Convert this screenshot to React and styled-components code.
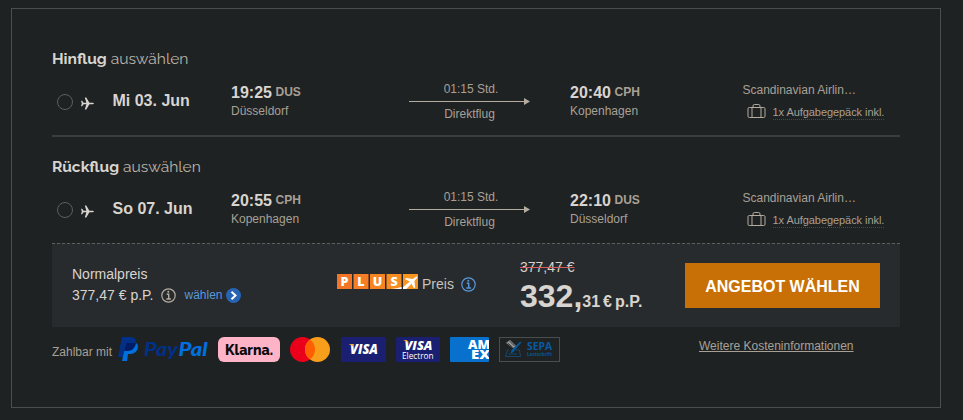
import React from "react";
import styled, { createGlobalStyle } from "styled-components";

const GlobalStyle = createGlobalStyle`
  * { box-sizing: border-box; }
  body {
    margin: 0;
    background: #1f2223;
    color: #d8d4cf;
    font-family: "Liberation Sans", Arial, sans-serif;
  }
`;

const Page = styled.main`
  height: 420px;
  padding: 8px 0 0 11px;
  overflow: hidden;
`;

const Offer = styled.article`
  width: 930px;
  height: 400px;
  padding: 20px 40px 0;
  border: 1px solid #4a4e4f;
`;

const FlightSection = styled.section`
  height: ${(p) => (p.$divided ? 108 : 106)}px;
  padding-top: 20px;
  border-bottom: ${(p) => (p.$divided ? "2px solid #3a3e40" : "none")};
`;

const Title = styled.h2`
  margin: 0 0 8px;
  height: 20px;
  font: 400 15.6px/20px Raleway, Lato, sans-serif;
  color: #b9b3a9;
  white-space: nowrap;
  strong { font-weight: 700; color: #d8d4cf; }
`;

const FlightRow = styled.div`
  display: grid;
  grid-template-columns: 60.5px 118.5px 178px 161px 172.5px 1fr;
`;

const Selector = styled.div`
  display: flex;
  align-items: center;
  gap: 8px;
  height: 50px;
  padding-left: 5px;
  svg { margin-top: 2px; }
`;

const Radio = styled.span`
  width: 16px;
  height: 16px;
  border: 1px solid #5c5f60;
  border-radius: 50%;
`;

const FlightDate = styled.div`
  font-size: 16px;
  font-weight: 700;
  line-height: 47px;
`;

const Airport = styled.div`
  padding-top: 5px;
  color: #a8a095;
`;

const Time = styled.div`
  display: flex;
  gap: 3.6px;
  height: 20px;
  font: 700 16px/22px "Liberation Sans", sans-serif;
  color: #d8d4cf;
  span { font-size: 12px; font-weight: 700; line-height: 20px; color: #a8a095; }
`;

const City = styled.div`
  font-size: 12px;
  line-height: 18px;
`;

const Route = styled.div`
  width: 121px;
  padding-top: 5px;
  text-align: center;
  font-size: 12px;
  line-height: 14px;
  color: #a8a095;
  svg { display: block; margin: 1px 0; }
`;

const Duration = styled.div`
  padding-left: 3px;
`;

const Carrier = styled.div`
  padding-top: 5px;
  font-size: 12px;
  line-height: 16px;
  color: #a8a095;
`;

const Baggage = styled.div`
  display: flex;
  align-items: flex-start;
  gap: 6.5px;
  height: 20px;
  margin-top: 6px;
  padding-left: 4.5px;
  font-size: 11px;
  span { height: 16px; line-height: 16px; border-bottom: 1px dotted #45494a; letter-spacing: -0.06px; white-space: nowrap; }
`;

const PriceBar = styled.section`
  display: grid;
  grid-template-columns: 265px 183px 165px 195px;
  height: 84px;
  padding-left: 20px;
  border-top: 1px dashed #5d6061;
  background: #282b2e;
`;

const NormalPrice = styled.div`
  padding-top: 19px;
  font-size: 14px;
  line-height: 22px;
`;

const PriceLine = styled.div`
  display: flex;
  align-items: center;
  height: 20px;
  > svg { margin: 1px 8px 0; }
`;

const SelectLink = styled.a`
  display: flex;
  align-items: center;
  gap: 3px;
  font-size: 12px;
  color: #5798dc;
  svg { margin-top: 1px; }
`;

const PlusPrice = styled.div`
  display: flex;
  align-items: flex-start;
  padding-top: 30px;
  font-size: 14px;
  line-height: 20px;
  color: #c7c2ba;
  > span { margin: 0 7.5px 0 4px; }
  > svg:last-child { margin-top: 3px; }
`;

const FinalPrice = styled.div`
  padding-top: 15px;
`;

const OldPrice = styled.del`
  display: block;
  width: 55px;
  font-size: 14px;
  line-height: 16px;
  text-decoration: line-through #d85c5c 1px;
  white-space: nowrap;
`;

const NewPrice = styled.div`
  display: flex;
  align-items: baseline;
  font-weight: 700;
  font-size: 32px;
  line-height: 43px;
  white-space: nowrap;
  span { font-size: 16px; word-spacing: -1.4px; }
`;

const OfferButton = styled.button`
  width: 195px;
  height: 45px;
  margin-top: 19px;
  padding: 2px 0 0 0;
  border: 0;
  background: #c87005;
  color: #fff;
  font: 700 16px "Liberation Sans", sans-serif;
`;

const Footer = styled.footer`
  display: flex;
  align-items: flex-start;
  height: 50px;
  font-size: 12px;
  color: #a8a095;
`;

const PaymentLabel = styled.span`
  width: 65px;
  padding-top: 18px;
  line-height: 14px;
`;

const Payments = styled.div`
  display: flex;
  gap: 10px;
  width: 582px;
  padding-top: 10px;
  svg { display: block; flex: none; }
`;

const CostLink = styled.a`
  margin-top: 12px;
  line-height: 14px;
  text-decoration: underline;
`;

const Plane = () => (
  <svg width="13" height="13" viewBox="0 0 13 13" fill="#d8d4cf">
    <path d="M0 3.8h1.1l1.5 2h2.8L3.8.5h1.5l3.1 5.2h3.2q1.3.1 1.3.8t-1.3.8H8.4l-3.1 5.2H3.8l1.6-5.3H2.6l-1.5 2H0l.8-2.7z" />
  </svg>
);

const Arrow = () => (
  <svg width="121" height="9" viewBox="0 0 121 9">
    <path d="M0 4.5h116" stroke="#b5aca0" />
    <path d="M115 1l6 3.5-6 3.5z" fill="#b5aca0" />
  </svg>
);

const Suitcase = () => (
  <svg width="19" height="15" viewBox="0 0 19 15" fill="none" stroke="#b5aca0" strokeWidth="1">
    <rect x="1" y="3.5" width="17" height="10" rx="1.3" />
    <path d="M5 3.5v10M14 3.5v10M6 3.5V2q0-1.5 1.4-1.5h4.2q1.4 0 1.4 1.5v1.5" />
  </svg>
);

const Info = ({ color }) => (
  <svg width="15" height="15" viewBox="0 0 15 15" fill="none" stroke={color}>
    <circle cx="7.5" cy="7.5" r="6.7" strokeWidth="1.2" />
    <path d="M5.7 6.2h2v4.7M5.3 11h4.6" strokeWidth="1.4" />
    <circle cx="7.3" cy="3.8" r="1" fill={color} stroke="none" />
  </svg>
);

const CircleChevron = () => (
  <svg width="15" height="15" viewBox="0 0 15 15">
    <circle cx="7.5" cy="7.5" r="7.5" fill="#2864b4" />
    <path d="M5.5 3.8l4 3.7-4 3.7" fill="none" stroke="#fff" strokeWidth="2" />
  </svg>
);

const PlusLogo = () => (
  <svg width="81" height="15" viewBox="0 0 81 15">
    {["P", "L", "U", "S"].map((letter, i) => (
      <g key={letter}>
        <rect x={i * 16.5} width="15" height="15" fill={["#f37527", "#f47d25", "#f68422", "#f78d20"][i]} />
        <text x={i * 16.5 + 7.5} y="12" textAnchor="middle" fill="#fff" fontFamily="Open Sans, sans-serif" fontSize="12.5" fontWeight="800">{letter}</text>
      </g>
    ))}
    <rect x="66" width="15" height="15" fill="#fa951e" />
    <path d="M54 15q6-.3 10.5-2v2z" fill="#fff" />
    <path d="M66 15v-1.8l6.8-5.6-5-2.6 1.2-1.1 6.8 1.2 2.6-2.1q1.2-.8 1.9-.4.3.9-.6 2l-2.3 2.5.8 6.2-1.2 1-2.5-4.6L69.3 15z" fill="#fff" />
  </svg>
);

const PayPal = () => (
  <svg width="91" height="26" viewBox="-1 0 91 26">
    <path d="M4 0h8q6 0 6 5 0 8-8 9H7l-1 6H0z" fill="#003087" />
    <path d="M8 6h10q2 1 2 4-1 7-8 7h-2l-1 7H4z" fill="#0070e0" />
    <path d="M8 6h10q-1 7-8 8H6z" fill="#001c64" />
    <g fontFamily="Lato, sans-serif" fontSize="19" fontWeight="900" fontStyle="italic">
      <text x="26" y="19" fill="#003087" textLength="34" lengthAdjust="spacingAndGlyphs">Pay</text>
      <text x="60.5" y="19" fill="#0070e0" textLength="29" lengthAdjust="spacingAndGlyphs">Pal</text>
    </g>
  </svg>
);

const Klarna = () => (
  <svg width="62" height="25" viewBox="0 0 62 25">
    <rect width="62" height="25" rx="6" fill="#ffb3c7" />
    <text x="7" y="18" fontFamily="Raleway, Lato, sans-serif" fontSize="15" fontWeight="800" fill="#0a0a0a" textLength="48" lengthAdjust="spacingAndGlyphs">Klarna.</text>
  </svg>
);

const Mastercard = () => (
  <svg width="41" height="25" viewBox="0 0 41 25">
    <circle cx="12.5" cy="12.5" r="12.5" fill="#eb001b" />
    <circle cx="27.5" cy="12.5" r="12.5" fill="#f79e1b" />
    <path d="M20 2.5a12.5 12.5 0 010 20 12.5 12.5 0 010-20" fill="#ff5f00" />
  </svg>
);

const Visa = ({ electron }) => (
  <svg width={electron ? 44 : 45} height="25" viewBox={electron ? "0 0 44 25" : "0 0 45 25"}>
    <rect width={electron ? 44 : 45} height="25" rx="1.5" fill="#1a1f71" />
    <text x={electron ? 8.5 : 9} y={electron ? 12.5 : 17} fontFamily="Open Sans, sans-serif" fontSize={electron ? 13 : 13.5} fontWeight="800" fontStyle="italic" fill="#fff" textLength="28" lengthAdjust="spacingAndGlyphs">VISA</text>
    <path d={electron ? "M7 3h4l2 4q-2-3-6-4z" : "M7.5 7h4l2 4q-2-3-6-4z"} fill="#f7a823" />
    {electron && <text x="6" y="21.5" fontFamily="Open Sans, sans-serif" fontSize="9.3" fill="#fff" fontWeight="500" textLength="31.5" lengthAdjust="spacingAndGlyphs">Electron</text>}
  </svg>
);

const Amex = () => (
  <svg width="39" height="25" viewBox="0 0 39 25">
    <rect width="39" height="25" rx="1" fill="#0871ce" />
    <g fill="#fff" fontFamily="Open Sans, sans-serif" fontWeight="800" fontSize="12">
      <text x="18" y="12" textLength="22" lengthAdjust="spacingAndGlyphs">AM</text>
      <text x="21" y="21.5" textLength="19" lengthAdjust="spacingAndGlyphs">EX</text>
    </g>
  </svg>
);

const Sepa = () => (
  <svg width="61" height="25" viewBox="0 0 61 25">
    <rect x=".5" y=".5" width="60" height="24" fill="none" stroke="#4a4e4f" />
    <path d="M7 6l4-3 6 6-3 2z" fill="#999c9d" />
    <path d="M8.5 6l5 4M10.5 4l5 5" stroke="#24292b" strokeWidth=".9" />
    <path d="M22 5.5L14 15l-2 1 1-3 8-8z" fill="#075aa3" stroke="#075aa3" strokeWidth=".6" />
    <path d="M10 13H8.5l-2 6.5h15l-1-6.5H17M9.5 17H18" fill="none" stroke="#17466c" />
    <text x="28" y="13.3" fontFamily="Open Sans, sans-serif" fontSize="10.5" fontWeight="700" fill="#075aa3" textLength="25" lengthAdjust="spacingAndGlyphs">SEPA</text>
    <text x="28" y="19" fontFamily="Open Sans, sans-serif" fontSize="5.3" fontWeight="800" fill="#075083" textLength="25" lengthAdjust="spacingAndGlyphs">Lastschrift</text>
  </svg>
);

const flights = [
  { title: "Hinflug", date: "Mi 03. Jun", from: ["19:25", "DUS", "Düsseldorf"], to: ["20:40", "CPH", "Kopenhagen"] },
  { title: "Rückflug", date: "So 07. Jun", from: ["20:55", "CPH", "Kopenhagen"], to: ["22:10", "DUS", "Düsseldorf"] },
];

const Stop = ({ stop: [time, code, city] }) => (
  <Airport>
    <Time>{time}<span>{code}</span></Time>
    <City>{city}</City>
  </Airport>
);

const Flight = ({ flight, divided }) => (
  <FlightSection $divided={divided}>
    <Title><strong>{flight.title}</strong> auswählen</Title>
    <FlightRow>
      <Selector><Radio /><Plane /></Selector>
      <FlightDate>{flight.date}</FlightDate>
      <Stop stop={flight.from} />
      <Route><Duration>01:15 Std.</Duration><Arrow />Direktflug</Route>
      <Stop stop={flight.to} />
      <Carrier>
        Scandinavian Airlin…
        <Baggage><Suitcase /><span>1x Aufgabegepäck inkl.</span></Baggage>
      </Carrier>
    </FlightRow>
  </FlightSection>
);

export default function App() {
  return (
    <Page>
      <GlobalStyle />
      <Offer>
        {flights.map((flight, i) => <Flight key={flight.title} flight={flight} divided={i === 0} />)}
        <PriceBar>
          <NormalPrice>
            Normalpreis
            <PriceLine>377,47 € p.P. <Info color="#b5aca0" /><SelectLink>wählen <CircleChevron /></SelectLink></PriceLine>
          </NormalPrice>
          <PlusPrice><PlusLogo /><span>Preis</span><Info color="#5798dc" /></PlusPrice>
          <FinalPrice>
            <OldPrice>377,47 €</OldPrice>
            <NewPrice>332,<span>31 € p.P.</span></NewPrice>
          </FinalPrice>
          <OfferButton>ANGEBOT WÄHLEN</OfferButton>
        </PriceBar>
        <Footer>
          <PaymentLabel>Zahlbar mit</PaymentLabel>
          <Payments><PayPal /><Klarna /><Mastercard /><Visa /><Visa electron /><Amex /><Sepa /></Payments>
          <CostLink>Weitere Kosteninformationen</CostLink>
        </Footer>
      </Offer>
    </Page>
  );
}
